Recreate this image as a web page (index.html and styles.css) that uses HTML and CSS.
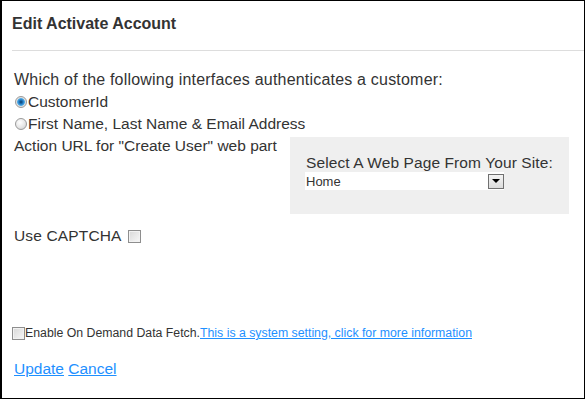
FILE: index.html
```html
<!DOCTYPE html>
<html lang="en">
  <head>
    <meta charset="UTF-8" />
    <title>Edit Activate Account</title>
    <link rel="stylesheet" href="styles.css">
  </head>
  <body>

    <div class="panel">
      <h2 class="title">Edit Activate Account</h2>

      <div class="form">
        <p class="line question">Which of the following interfaces authenticates a customer:</p>
        <label class="line choice"><input type="radio" name="auth" checked>CustomerId</label>
        <label class="line choice"><input type="radio" name="auth">First Name, Last Name &amp; Email Address</label>

        <div class="action">
          <span class="line label">Action URL for "Create User" web part</span>
          <div class="picker">
            <div class="picker-text">Select A Web Page From Your Site:</div>
            <div class="select">
              <select>
                <option>Home</option>
              </select>
              <span class="arrow"></span>
            </div>
          </div>
        </div>

        <label class="line captcha">Use CAPTCHA <input type="checkbox"></label>

        <div class="fetch">
          <input type="checkbox"><span>Enable On Demand Data Fetch.</span><a href="#">This is a system setting, click for more information</a>
        </div>

        <div class="buttons">
          <a href="#">Update</a> <a href="#">Cancel</a>
        </div>
      </div>
    </div>

  </body>
</html>
```

FILE: styles.css
```css
* { font-family: "Liberation Sans", Arial, sans-serif; box-sizing: border-box; }
body { margin: 0; background: white; color: #333; }

.panel {
  width: 585px;
  height: 399px;
  border: 1px solid #000;
  border-left-width: 2px;
}

.title {
  margin: 0 0 0 10px;
  padding: 13px 0 16px;
  font-size: 16px;
  line-height: 20px;
  font-weight: bold;
  color: #333;
  border-bottom: 1px solid #ddd;
}

.form { padding: 18px 12px 0; font-size: 15.5px; }

.line { display: block; margin: 0; line-height: 22px; }
.question { font-size: 16px; letter-spacing: 0.2px; }
.choice { display: flex; align-items: center; }

input[type=radio] {
  appearance: none;
  width: 12px;
  height: 12px;
  margin: 0 1px 0 1px;
  border: 1px solid #9a9a9a;
  border-radius: 50%;
  background: radial-gradient(circle at 40% 35%, #fff 0, #e6e6e6 55%, #c8c8c8 100%);
}
input[type=radio]:checked {
  background: radial-gradient(circle, #0a3a66 0, #1f78c0 2px, #4eaae6 3.5px, #dedede 4.2px, #f4f4f4 100%);
}

input[type=checkbox] {
  appearance: none;
  width: 13px;
  height: 13px;
  margin: 0;
  border: 1px solid #8e8e8e;
  background: linear-gradient(135deg, #d8d8d8, #f8f8f8);
  box-shadow: inset 0 0 0 1px #f2f2f2;
}

.action { display: flex; align-items: flex-start; }
.label { flex: 0 0 276px; }

.picker {
  width: 279px;
  margin-top: 2px;
  padding: 17px 16px 24px 15px;
  background: #efefef;
}
.picker-text { line-height: 18px; padding-left: 1px; letter-spacing: 0.1px; white-space: nowrap; }

.select {
  display: flex;
  align-items: center;
  width: 199px;
  height: 18px;
  background: white;
}
.select select {
  appearance: none;
  flex: 1;
  border: none;
  background: none;
  padding: 0 0 0 1px;
  font-size: 13px;
  color: #333;
}
.arrow {
  width: 16px;
  height: 15px;
  border: 1px solid #707070;
  background: linear-gradient(#f4f4f4, #dcdcdc);
  display: flex;
  align-items: center;
  justify-content: center;
}
.arrow::after {
  content: "";
  border-left: 4px solid transparent;
  border-right: 4px solid transparent;
  border-top: 4px solid #000;
}

.captcha { display: flex; align-items: center; gap: 6px; margin-top: 11px; letter-spacing: 0.15px; }

.fetch {
  display: flex;
  align-items: center;
  margin: 78px 0 0 -2px;
  font-size: 12.3px;
  line-height: 16px;
}
.fetch a { color: #1e90ff; }

.buttons { margin-top: 17px; line-height: 22px; }
.buttons a { color: #1e90ff; }
```
